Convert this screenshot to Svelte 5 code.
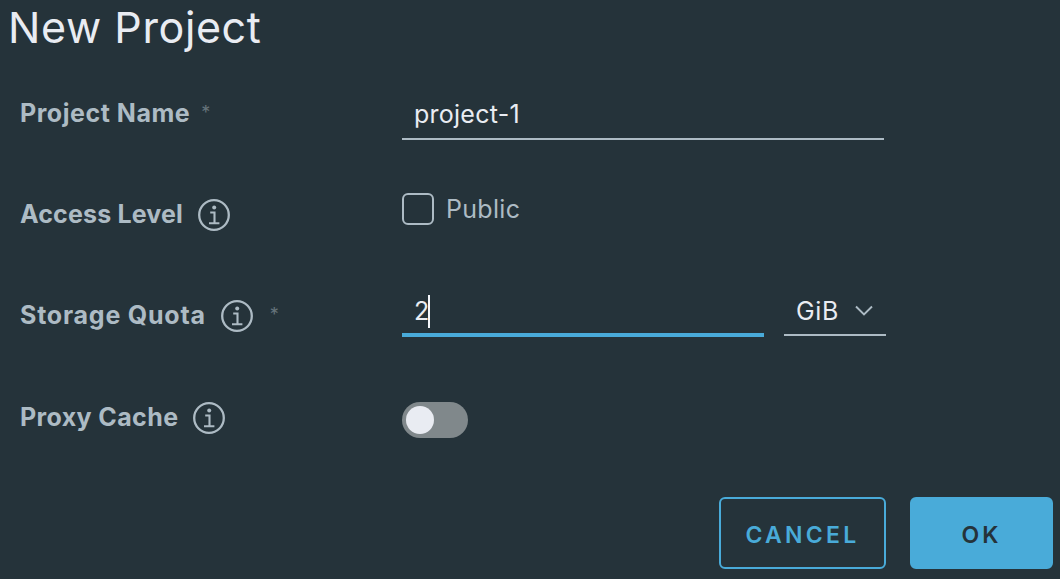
<script>
  let name = $state('project-1');
  let quota = $state('2');
  let unit = $state('GiB');
  let isPublic = $state(false);
  let proxy = $state(false);
</script>

{#snippet info()}
  <svg class="info" viewBox="0 0 32 32" width="32" height="32" fill="none" stroke="currentColor">
    <circle cx="16" cy="16" r="14.8" stroke-width="2.3" />
    <circle cx="16.2" cy="8.4" r="2" fill="currentColor" stroke="none" />
    <path d="M12.2 13.5h4.3v10.2M11 24.2h10.4" stroke-width="2.1" />
  </svg>
{/snippet}

<main>
  <h1>New Project</h1>
  <form>
    <div class="row">
      <div class="label"><span class="n1">Project Name</span><sup class="s1">*</sup></div>
      <div class="field name"><span class="value v1">{name}</span></div>
    </div>
    <div class="row">
      <div class="label"><span class="n2">Access Level</span>{@render info()}</div>
      <div class="check" role="checkbox" tabindex="-1" aria-checked={isPublic}>
        <i class="box"></i><span>Public</span>
      </div>
    </div>
    <div class="row">
      <div class="label"><span class="n3">Storage Quota</span>{@render info()}<sup class="s3">*</sup></div>
      <div class="quota">
        <div class="field active"><span class="value v2">{quota}</span><i class="caret"></i></div>
        <div class="field select">
          <span class="value v3">{unit}</span>
          <svg viewBox="0 0 18 12" width="18" height="12" fill="none" stroke="#adbbc4" stroke-width="1.9"><path d="M1 1.5l8 8 8-8" /></svg>
        </div>
      </div>
    </div>
    <div class="row">
      <div class="label"><span class="n4">Proxy Cache</span>{@render info()}</div>
      <div class="toggle" class:on={proxy}><i></i></div>
    </div>
  </form>
  <footer>
    <button class="cancel">CANCEL</button>
    <button class="ok">OK</button>
  </footer>
</main>

<style>
  :global(body) { background: #25333a; }
  main {
    box-sizing: border-box;
    width: 1060px;
    height: 579px;
    overflow: hidden;
    background: #25333a;
    color: #adbbc4;
    font-family: Inter, sans-serif;
  }
  h1 {
    margin: 0;
    height: 63px;
    padding-left: 8px;
    box-sizing: border-box;
    font-size: 43px;
    line-height: 55px;
    font-weight: 380;
    letter-spacing: 0.6px;
    color: #e9ecf2;
    white-space: nowrap;
  }
  form { padding-left: 20px; }
  .row {
    display: grid;
    grid-template-columns: 382px 1fr;
    align-items: start;
    height: 101.4px;
  }
  .label {
    display: flex;
    align-items: center;
    height: 32px;
    margin-top: 33.6px;
    font-size: 25px;
    font-weight: 660;
    line-height: 32px;
    white-space: nowrap;
  }
  .n1 { letter-spacing: 0.53px; }
  .n2 { letter-spacing: 0.15px; }
  .n3 { letter-spacing: 0.78px; }
  .n4 { letter-spacing: 0.38px; }
  .info { flex: none; margin-top: 2px; margin-left: 15px; }
  sup { font-size: 18px; font-weight: 400; line-height: 18px; color: #65737a; }
  .s1 { margin-left: 11px; }
  .s3 { margin-left: 17px; }
  .field {
    box-sizing: border-box;
    display: flex;
    align-items: center;
    border-bottom: 2px solid #adbbc4;
    padding-left: 12px;
    color: #e9ecf2;
    font-size: 25px;
    line-height: 32px;
    white-space: nowrap;
  }
  .value { padding-bottom: 2px; }
  .v1 { letter-spacing: 0.25px; }
  .v3 { letter-spacing: 0.7px; padding-bottom: 4px; }
  .name { width: 482px; height: 48px; margin-top: 29px; }
  .check {
    display: flex;
    align-items: center;
    gap: 12px;
    margin-top: 29px;
    height: 32px;
    font-size: 25px;
    line-height: 32px;
    letter-spacing: 0.3px;
  }
  .box {
    box-sizing: border-box;
    width: 32px;
    height: 32px;
    border: 2px solid #adbbc4;
    border-radius: 6px;
  }
  .quota { display: flex; gap: 20px; margin-top: 27px; align-items: flex-start; }
  .active { width: 362px; height: 44px; border-bottom: 4px solid #49abd9; }
  .v2 { padding-bottom: 3px; }
  .caret { width: 2px; height: 33px; margin: 0 0 2px -1px; background: #f4f6fa; }
  .select { width: 102px; height: 43px; justify-content: space-between; padding-right: 13px; }
  .select svg { margin-bottom: 4px; }
  .toggle {
    box-sizing: border-box;
    width: 66px;
    height: 36px;
    margin-top: 35px;
    padding: 4px;
    border-radius: 18px;
    background: #80888b;
  }
  .toggle i { display: block; width: 28px; height: 28px; border-radius: 50%; background: #e9ecf2; }
  .toggle.on i { margin-left: auto; }
  footer { display: flex; justify-content: flex-end; gap: 24px; padding-right: 7px; margin-top: 28.7px; }
  button {
    box-sizing: border-box;
    height: 72px;
    border: 2px solid #49abd9;
    border-radius: 6px;
    font: 600 23px Inter, sans-serif;
    letter-spacing: 3px;
    padding: 4px 0 0;
  }
  .cancel { width: 167px; background: transparent; color: #49abd9; letter-spacing: 3.3px; }
  .ok { width: 143px; background: #49abd9; color: #25333a; }
</style>
